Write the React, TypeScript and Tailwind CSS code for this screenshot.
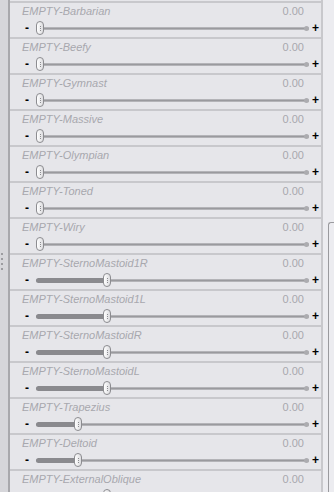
import React from "react";

const morphs = [
  { name: "EMPTY-Barbarian", pos: 0 },
  { name: "EMPTY-Beefy", pos: 0 },
  { name: "EMPTY-Gymnast", pos: 0 },
  { name: "EMPTY-Massive", pos: 0 },
  { name: "EMPTY-Olympian", pos: 0 },
  { name: "EMPTY-Toned", pos: 0 },
  { name: "EMPTY-Wiry", pos: 0 },
  { name: "EMPTY-SternoMastoid1R", pos: 67 },
  { name: "EMPTY-SternoMastoid1L", pos: 67 },
  { name: "EMPTY-SternoMastoidR", pos: 67 },
  { name: "EMPTY-SternoMastoidL", pos: 67 },
  { name: "EMPTY-Trapezius", pos: 38 },
  { name: "EMPTY-Deltoid", pos: 38 },
  { name: "EMPTY-ExternalOblique", pos: 67 },
];

function Slider({ pos }: { pos: number }) {
  return (
    <div className="relative flex-1 h-[14px] flex items-center">
      {/* track */}
      <div className="absolute left-0 right-0 h-[3px] rounded-full bg-[#9a9a9e] border-y border-[#b4b4b8]" />
      <div className="absolute right-0 w-[5px] h-[5px] rounded-full bg-[#acacb0]" />
      {pos > 0 && (
        <div
          className="absolute left-0 h-[5px] rounded-full bg-[#8a8a8e]"
          style={{ width: pos + 2 }}
        />
      )}
      {/* thumb */}
      <div
        className="absolute top-0 w-[8px] h-[14px] rounded-full border border-[#8c8c90] bg-gradient-to-r from-[#ffffff] to-[#dcdcdf] flex flex-col items-center justify-center gap-[1px]"
        style={{ left: pos }}
      >
        <div className="w-[1px] h-[1px] bg-[#8c8c90]" />
        <div className="w-[1px] h-[1px] bg-[#8c8c90]" />
        <div className="w-[1px] h-[1px] bg-[#8c8c90]" />
      </div>
    </div>
  );
}

function Row({ name, pos }: { name: string; pos: number }) {
  return (
    <div className="h-[36px] shrink-0 border-b-2 border-[#c8c8cc] flex flex-col">
      <div className="flex justify-between items-center pt-[2px] pl-[12px] pr-[17px] h-[15px] text-[11px] leading-[13px] text-[#a8a8ae]">
        <span className="italic">{name}</span>
        <span>0.00</span>
      </div>
      <div className="flex items-center mt-[3px] h-[14px] pl-[15px] pr-[2px]">
        <span className="w-[11px] text-[12px] font-bold leading-none text-black">-</span>
        <Slider pos={pos} />
        <span className="w-[10px] pl-[3px] text-[12px] font-bold leading-none text-black">+</span>
      </div>
    </div>
  );
}

export default function App() {
  return (
    <div
      className="w-[334px] h-[492px] overflow-hidden flex bg-[#e6e6ea]"
      style={{ fontFamily: '"Liberation Sans", Arial, sans-serif' }}
    >
      {/* left strip */}
      <div className="w-[10px] shrink-0 bg-[#d6d6da] border-r-2 border-[#a8a8ac] flex flex-col items-start justify-center pt-[30px] gap-[3px]">
        {[0, 1, 2, 3].map((i) => (
          <div key={i} className="w-[2px] h-[2px] bg-[#9c9ca0] ml-[1px]" />
        ))}
      </div>
      {/* rows */}
      <div className="w-[313px] shrink-0 flex flex-col border-r-2 border-[#c8c8cc]">
        <div className="h-[1px] shrink-0" />
        <div className="h-[2px] shrink-0 bg-[#c8c8cc]" />
        {morphs.map((m) => (
          <Row key={m.name} name={m.name} pos={m.pos} />
        ))}
      </div>
      {/* right scroll area */}
      <div className="flex-1 bg-[#ececf0] pt-[222px] pl-[5px]">
        <div className="h-full border-l border-t border-[#9a9a9e] rounded-tl-[3px]" />
      </div>
    </div>
  );
}
